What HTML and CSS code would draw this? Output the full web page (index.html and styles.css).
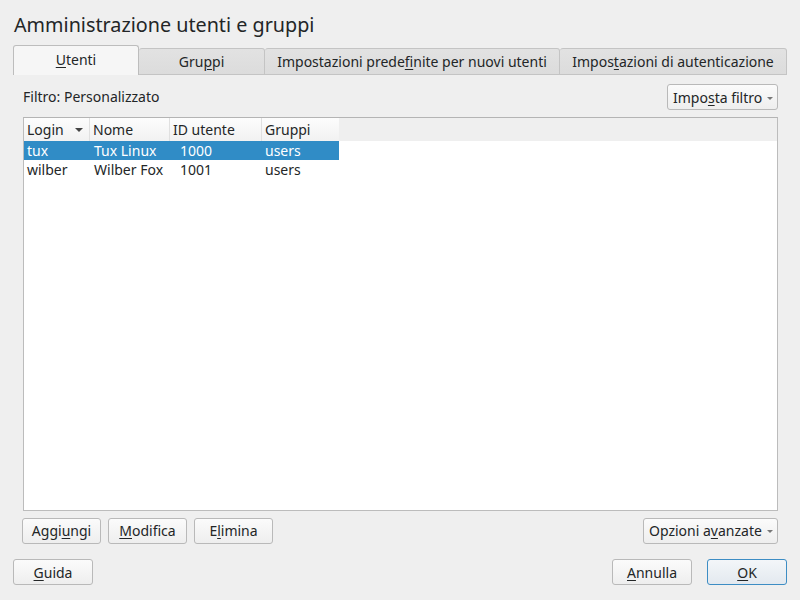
FILE: index.html
```html
<!DOCTYPE html>
<html>
<head>
<meta charset="utf-8">
<link rel="stylesheet" href="styles.css">
</head>
<body>
<div class="dialog">
  <h1 class="title">Amministrazione utenti e gruppi</h1>
  <div class="tabs">
    <div class="tab active w1"><span><u>U</u>tenti</span></div>
    <div class="tab w2"><span>Gru<u>p</u>pi</span></div>
    <div class="tab w3"><span>Impostazioni prede<u>f</u>inite per nuovi utenti</span></div>
    <div class="tab w4"><span>Impos<u>t</u>azioni di autenticazione</span></div>
    <div class="tab-fill"></div>
  </div>
  <div class="pane">
    <div class="filter-row">
      <span class="filter-label">Filtro: Personalizzato</span>
      <button class="btn menu-btn"><span>Impo<u>s</u>ta filtro</span><span class="caret"></span></button>
    </div>
    <div class="table">
      <div class="thead">
        <div class="th c1">Login<span class="sort"></span></div>
        <div class="th c2">Nome</div>
        <div class="th c3">ID utente</div>
        <div class="th c4">Gruppi</div>
        <div class="th-fill"></div>
      </div>
      <div class="row selected">
        <div class="td c1">tux</div>
        <div class="td c2">Tux Linux</div>
        <div class="td c3 num">1000</div>
        <div class="td c4">users</div>
      </div>
      <div class="row">
        <div class="td c1">wilber</div>
        <div class="td c2">Wilber Fox</div>
        <div class="td c3 num">1001</div>
        <div class="td c4">users</div>
      </div>
    </div>
    <div class="action-row">
      <button class="btn b79"><span>Aggi<u>u</u>ngi</span></button>
      <button class="btn b79"><span><u>M</u>odifica</span></button>
      <button class="btn b79"><span>E<u>l</u>imina</span></button>
      <div class="spacer"></div>
      <button class="btn menu-btn adv"><span>Opzioni a<u>v</u>anzate</span><span class="caret"></span></button>
    </div>
  </div>
  <div class="dialog-buttons">
    <button class="btn b80"><span><u>G</u>uida</span></button>
    <div class="spacer"></div>
    <button class="btn b80"><span><u>A</u>nnulla</span></button>
    <button class="btn b80 default"><span><u>O</u>K</span></button>
  </div>
</div>
</body>
</html>
```

FILE: styles.css
```css
* { box-sizing: border-box; }
html, body {
  margin: 0;
  padding: 0;
  width: 800px;
  height: 600px;
  background: #efefef;
  font-family: "Noto Sans", "Open Sans", sans-serif;
  font-size: 14px;
  color: #232627;
  overflow: hidden;
}
u { text-decoration: underline; text-underline-offset: 2px; }
.dialog { display: flex; flex-direction: column; height: 600px; }
.title {
  margin: 0;
  padding: 10px 0 0 14px;
  height: 45px;
  font-size: 19.75px;
  font-weight: normal;
  line-height: 30px;
  color: #232627;
}
.tabs {
  display: flex;
  align-items: flex-end;
  height: 30px;
  padding-left: 13px;
}
.tab {
  height: 27px;
  display: flex;
  align-items: center;
  justify-content: center;
  background: linear-gradient(#e2e2e2, #dcdcdc);
  border: 1px solid #c4c4c4;
  border-left: none;
  border-radius: 3px 3px 0 0;
  padding-bottom: 1px;
  white-space: nowrap;
}
.tab.w1 { width: 126px; }
.tab.w2 { width: 126px; }
.tab.w3 { width: 295px; }
.tab.w4 { width: 227px; }
.tab.active {
  height: 30px;
  background: #f6f6f6;
  border: 1px solid #bdbdbd;
  border-bottom: none;
  padding-bottom: 3px;
}
.tab-fill { flex: 1; }
.pane {
  display: flex;
  flex-direction: column;
  padding: 0 22px 0 23px;
}
.filter-row {
  display: flex;
  align-items: center;
  justify-content: space-between;
  margin-top: 9px;
  height: 26px;
}
.filter-label { margin-top: -1px; }
.btn {
  font-family: inherit;
  font-size: 14px;
  color: #232627;
  height: 26px;
  border: 1px solid #b9b9b9;
  border-radius: 3px;
  background: linear-gradient(#fbfbfb, #eeeeee);
  padding: 1px 6px 0 6px;
  display: inline-flex;
  align-items: center;
  justify-content: center;
  line-height: 1;
  white-space: nowrap;
}
.menu-btn { width: 111px; padding: 1px 4px 0 5px; justify-content: space-between; }
.menu-btn.adv { width: 135px; }
.caret {
  display: inline-block;
  width: 0; height: 0;
  border-left: 3px solid transparent;
  border-right: 3px solid transparent;
  border-top: 3px solid #777;
  margin-left: 4px;
  margin-top: 1px;
}
.table {
  margin-top: 7px;
  height: 394px;
  background: #fff;
  border: 1px solid #bcbcbc;
  border-top-color: #b4b4b4;
}
.thead { display: flex; height: 23px; background: #efefef; }
.th {
  display: flex;
  align-items: center;
  padding-left: 3px;
  height: 23px;
  background: linear-gradient(#fdfdfd, #f1f1f1);
  border-right: 1px solid #e0e0e0;
  position: relative;
  white-space: nowrap;
}
.th-fill { flex: 1; }
.c1 { width: 66px; }
.c2 { width: 80px; }
.c3 { width: 92px; }
.c4 { width: 77px; }
.th.c4 { border-right: none; }
.sort {
  position: absolute;
  left: 51px;
  top: 10px;
  width: 0; height: 0;
  border-left: 4px solid transparent;
  border-right: 4px solid transparent;
  border-top: 4px solid #444;
}
.row { display: flex; height: 19px; width: 315px; }
.td { display: flex; align-items: center; padding-left: 3px; height: 19px; white-space: nowrap; }
.td.c2 { padding-left: 4px; }
.td.num { padding-left: 10px; }
.row.selected { background: #308cc6; color: #fff; }
.action-row {
  display: flex;
  align-items: center;
  margin-top: 6px;
  height: 27px;
  margin-left: -1px;
  gap: 7px;
}
.b79 { width: 79px; }
.spacer { flex: 1; }
.dialog-buttons {
  display: flex;
  align-items: center;
  padding: 15px 13px 0 13px;
  gap: 15px;
}
.b80 { width: 80px; }
.default {
  border-color: #3d8dc4;
  background: linear-gradient(#f3f6f9, #e3e9ef);
}
```
